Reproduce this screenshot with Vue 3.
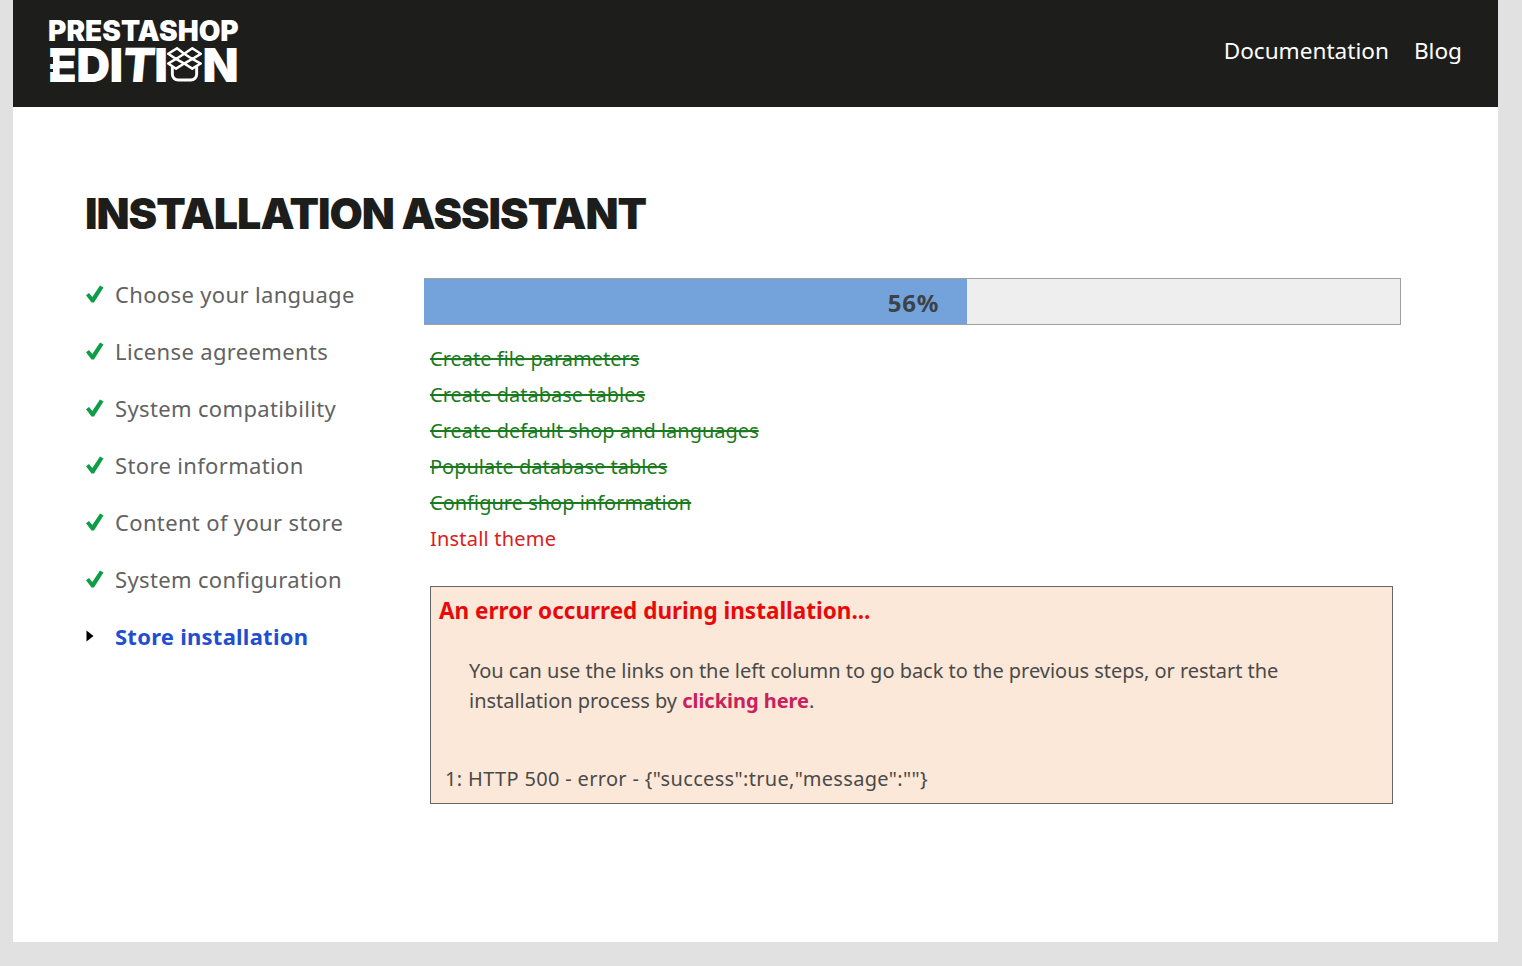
<script setup>
const steps = ['Choose your language','License agreements','System compatibility','Store information','Content of your store','System configuration']
const tasks = ['Create file parameters','Create database tables','Create default shop and languages','Populate database tables','Configure shop information']
</script>

<template>
  <div class="shell">
    <header class="top">
      <div class="logo">
        <div class="l1">PRESTASHOP</div>
        <div class="l2">
          <span class="e">E</span><span>DI</span><span class="t">T</span><span>I</span>
          <svg class="box" viewBox="0 0 36 36" width="35" height="35" fill="none" stroke="#fff" stroke-width="2.6" stroke-linejoin="round">
            <path d="M1.300 7 10.300 1.300 17.700 7 9.300 12.300z"/>
            <path d="M17.700 7 26 1.300 34.700 7 26 12.300z"/>
            <path d="M1.300 17 9.300 12.300 17.700 17 9.300 22.300z"/>
            <path d="M34.700 17 26 12.300 17.700 17 26 22.300z"/>
            <path d="M5.500 20V28a6 6 0 0 0 6 6h13a6 6 0 0 0 6-6V20" stroke-width="3"/>
          </svg>
          <span>N</span>
        </div>
      </div>
      <nav class="nav"><a>Documentation</a><a>Blog</a></nav>
    </header>
    <main class="body">
      <h1>INSTALLATION ASSISTANT</h1>
      <div class="cols">
        <ul class="steps">
          <li v-for="s in steps" :key="s" class="step">
            <svg class="icon" viewBox="0 0 18 18" width="18" height="18"><path d="M0 10.200 3 8l3.300 4L14 .5l3.500 2L8 17.500H5.500z" fill="#0f9d47"/></svg>
            <span>{{ s }}</span>
          </li>
          <li class="step current">
            <svg class="icon" viewBox="0 0 18 18" width="18" height="18"><path d="M.5 3.500 7.500 9l-7 5.500z" fill="#000"/></svg>
            <span>Store installation</span>
          </li>
        </ul>
        <section class="content">
          <div class="bar"><div class="fill"><b>56%</b></div></div>
          <ul class="tasks">
            <li v-for="t in tasks" :key="t" class="done">{{ t }}</li>
            <li class="fail">Install theme</li>
          </ul>
          <div class="err">
            <h3>An error occurred during installation...</h3>
            <p>You can use the links on the left column to go back to the previous steps, or restart the installation process by <a>clicking here</a>.</p>
            <div class="log">1: HTTP 500 - error - {"success":true,"message":""}</div>
          </div>
        </section>
      </div>
    </main>
  </div>
</template>

<style>
html, body { margin: 0; background: #e1e1e1; }
</style>
<style scoped>
.shell { width: 1485px; height: 942px; margin-left: 13px; background: #fff; font-family: "Noto Sans", sans-serif; }
.top { height: 107px; background: #1d1d1b; display: flex; justify-content: space-between; align-items: center; padding: 0 36px 0 35px; box-sizing: border-box; color: #fff; }
.logo { width: 190px; margin-top: -5px; font-family: Inter, sans-serif; font-weight: 900; color: #fff; }
.l1 { font-size: 28px; line-height: 22px; white-space: nowrap; }
.l2 { display: flex; align-items: center; justify-content: space-between; font-size: 47px; line-height: 36px; height: 36px; margin-top: 5px; letter-spacing: -.6px; }
.e { position: relative; }
.e::before { content: ""; position: absolute; left: -1px; top: 10px; width: 6px; height: 7px; background: #1d1d1b; }
.e::after { content: ""; position: absolute; left: -1px; top: 22px; width: 6px; height: 3px; background: #1d1d1b; }
.t { display: inline-block; transform: skewX(-5deg); }
.box { flex: none; }
.nav { display: flex; gap: 25px; font-size: 22.6px; line-height: 30px; margin-top: -6px; }
.body { padding: 0 97px 0 73px; }
h1 { margin: 0 0 0 -1px; padding-top: 82px; font-family: Inter, sans-serif; font-weight: 900; font-size: 43px; line-height: 48px; letter-spacing: -1.03px; color: #1d1d1b; white-space: nowrap; }
.cols { display: flex; margin-top: 41px; }
.steps { list-style: none; margin: -1px 0 0; padding: 0; width: 338px; flex: none; }
.step { display: flex; align-items: center; height: 34px; margin-bottom: 23px; font-size: 22px; letter-spacing: .35px; color: #626262; white-space: nowrap; }
.step span { margin-left: 11px; }
.current { color: #1f4fd0; font-weight: 700; letter-spacing: .25px; }
.content { width: 977px; flex: none; }
.bar { height: 47px; box-sizing: border-box; border: 1px solid #a0a0a0; background: #eee; }
.fill { width: 543px; height: 45px; margin-left: -1px; background: #74a2da; display: flex; justify-content: flex-end; align-items: center; padding: 1px 28px 0 0; box-sizing: border-box; color: #3c4247; font-size: 24px; letter-spacing: .7px; }
.tasks { list-style: none; margin: 16px 0 0 6px; padding: 0; font-size: 20px; line-height: 36px; }
.done { color: #1a7a22; text-decoration: line-through; }
.fail { color: #d8201c; letter-spacing: .2px; }
.err { box-sizing: border-box; width: 963px; height: 218px; margin: 29px 0 0 6px; border: 1px solid #666; background: #fbe8d8; padding: 9px 8px; color: #4a4a4a; font-size: 20px; }
.err h3 { margin: 0; font-size: 22.5px; line-height: 30px; font-weight: 700; color: #e80a0a; }
.err p { margin: 30px 60px 0 30px; line-height: 30px; letter-spacing: -.03px; }
.err a { color: #c9215c; font-weight: 700; }
.log { margin: 48px 0 0 6px; line-height: 30px; letter-spacing: .33px; }
</style>
